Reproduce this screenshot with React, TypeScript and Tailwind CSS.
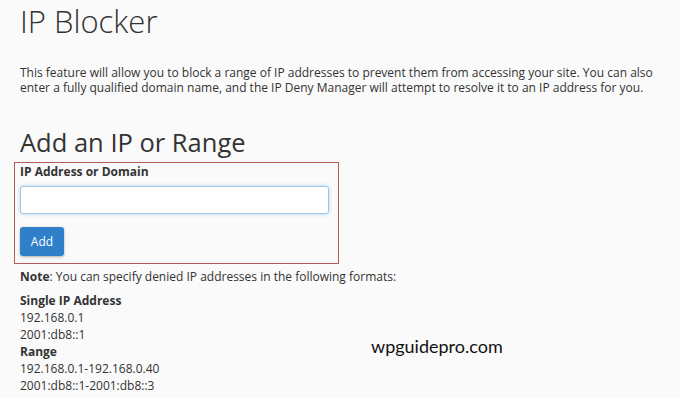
const App = () => {
  return (
    <div className="relative w-[680px] h-[398px] overflow-hidden bg-[#fafafa] text-[#333] font-['Open_Sans',sans-serif] px-5">
      <h1 className="text-[31px] leading-[40px] font-light pt-px">IP Blocker</h1>
      <p className="mt-[24px] text-[12px] leading-[15px] w-[650px]">
        This feature will allow you to block a range of IP addresses to prevent them from accessing your site. You can also enter a fully qualified domain name, and the IP Deny Manager will attempt to resolve it to an IP address for you.
      </p>
      <h2 className="mt-[32px] text-[25.5px] leading-[30px] font-normal">Add an IP or Range</h2>
      <div className="mt-[5px] -mx-[6px] w-[325px] h-[102px] border border-[#b65a5a] px-[5px] pt-px">
        <label className="block text-[12px] leading-[15px] font-bold">IP Address or Domain</label>
        <input
          type="text"
          className="mt-[7px] block w-[309px] h-[28px] bg-white border border-[#9ec3de] rounded-[3px] shadow-[0_0_4px_rgba(102,175,233,0.45)] outline-none"
        />
        <button className="mt-[13px] block w-[44px] h-[29px] bg-[#2f80c9] text-white text-[12px] rounded-[3px] shadow-[0_1px_3px_rgba(0,0,0,0.3)]">
          Add
        </button>
      </div>
      <p className="mt-[5px] text-[12px] leading-[15px]">
        <span className="font-bold">Note</span>: You can specify denied IP addresses in the following formats:
      </p>
      <div className="mt-[8px] text-[12px] leading-[17px]">
        <div className="font-bold">Single IP Address</div>
        <div>192.168.0.1</div>
        <div>2001:db8::1</div>
        <div className="font-bold">Range</div>
        <div>192.168.0.1-192.168.0.40</div>
        <div>2001:db8::1-2001:db8::3</div>
      </div>
      <div className="absolute left-[371px] top-[334px] text-[18px] leading-[24px] text-[#111] font-['Lato',sans-serif]">
        wpguidepro.com
      </div>
    </div>
  );
};

export default App;
